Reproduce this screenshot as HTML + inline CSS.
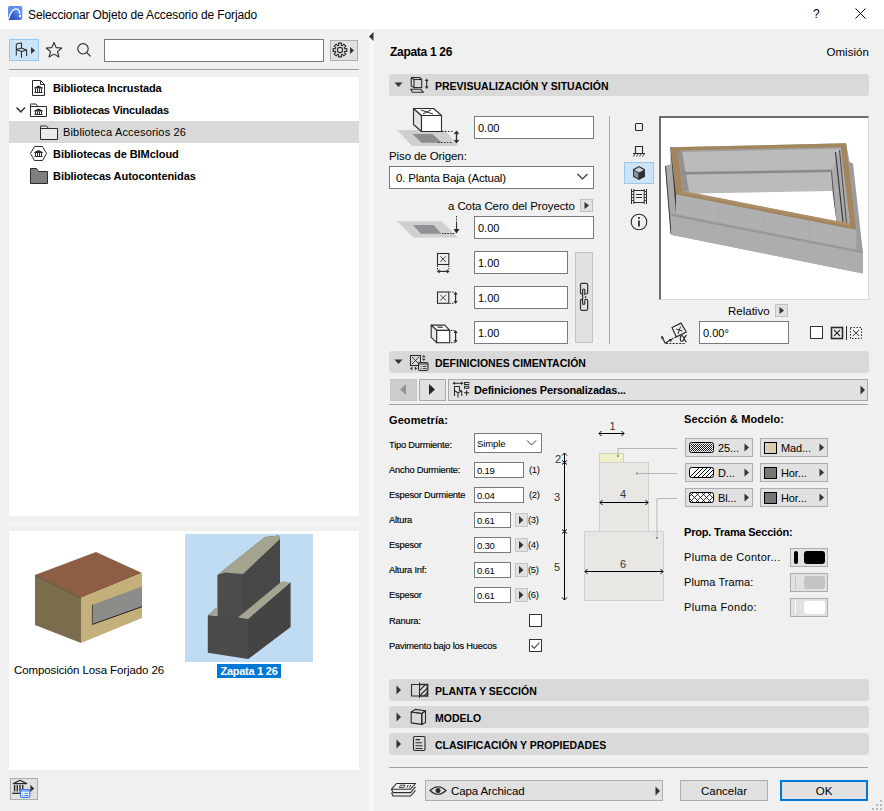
<!DOCTYPE html>
<html><head><meta charset="utf-8"><style>
html,body{margin:0;padding:0;width:884px;height:811px;overflow:hidden;background:#f0f0f0;font-family:"Liberation Sans", sans-serif;}
body{position:relative;}
</style></head><body>
<div style="position:absolute;left:0px;top:0px;width:884px;height:29px;background:#fff"></div>
<svg style="position:absolute;left:8px;top:6px;" width="15" height="15" viewBox="0 0 15 15"><defs><linearGradient id="lg1" x1="0" y1="1" x2="0.8" y2="0.2"><stop offset="0" stop-color="#1f3fa8"/><stop offset="0.6" stop-color="#3f6ad0"/><stop offset="1" stop-color="#5f8ff0"/></linearGradient></defs><rect x="0" y="0" width="14.3" height="14" rx="1.8" fill="#5e8ef0"/><path d="M0.3 14 Q3 3.4 8 3 Q11.6 2.9 12.3 8.5 V14 Z" fill="url(#lg1)"/><path d="M0.4 13.6 Q3 3.2 8 2.8 Q11.3 2.7 12 7.8" stroke="#fff" stroke-width="1.3" fill="none"/><rect x="11" y="8.9" width="2.1" height="2.1" fill="#fff"/></svg>
<div style="position:absolute;top:8.64px;font-size:12px;line-height:12px;font-weight:normal;color:#000;white-space:nowrap;letter-spacing:-0.12px;left:28px;">Seleccionar Objeto de Accesorio de Forjado</div>
<div style="position:absolute;top:7.84px;font-size:12px;line-height:12px;font-weight:normal;color:#000;white-space:nowrap;letter-spacing:0px;left:813px;">?</div>
<svg style="position:absolute;left:855px;top:8px;" width="12" height="11" viewBox="0 0 12 11"><path d="M0.5 0.5 L10.5 10.5 M10.5 0.5 L0.5 10.5" stroke="#000" stroke-width="1" fill="none"/></svg>
<div style="position:absolute;left:0px;top:29px;width:369px;height:782px;background:#f0f0f0"></div>
<div style="position:absolute;left:369px;top:29px;width:5px;height:782px;background:#f7f7f7"></div>
<div style="position:absolute;left:374px;top:29px;width:510px;height:782px;background:#f0f0f0"></div>
<svg style="position:absolute;left:369px;top:32px;" width="5" height="9" viewBox="0 0 5 9"><path d="M0 4.5 L4.5 0 L4.5 9 Z" fill="#333"/></svg>
<div style="position:absolute;left:9px;top:39px;width:30px;height:22px;background:#cce4f7;border:1px solid #99c9ef;box-sizing:border-box"></div>
<svg style="position:absolute;left:14px;top:42px;" width="24" height="17" viewBox="0 0 24 17"><path d="M2.3 13.6 V3 Q2.3 1.7 3.8 1.4 L7.5 1 V6 M2.3 7.4 L7.5 9.4 L12.6 8 L7.5 6 Z M7.5 9.4 V15.8 M12.6 8 V14" stroke="#2b2b2b" stroke-width="1.05" fill="none" stroke-linejoin="round"/><path d="M17 5 L21 8.5 L17 12 Z" fill="#333"/></svg>
<svg style="position:absolute;left:45px;top:41px;" width="18" height="18" viewBox="0 0 18 18"><path d="M9 1.5 L11.2 6.6 L16.7 7 L12.5 10.6 L13.9 16 L9 13.1 L4.1 16 L5.5 10.6 L1.3 7 L6.8 6.6 Z" stroke="#2b2b2b" stroke-width="1.1" fill="none" stroke-linejoin="round"/></svg>
<svg style="position:absolute;left:75px;top:41px;" width="18" height="18" viewBox="0 0 18 18"><circle cx="8" cy="7.8" r="5.2" stroke="#2b2b2b" stroke-width="1.1" fill="none"/><path d="M11.8 11.6 L15.6 15.4" stroke="#2b2b2b" stroke-width="1.2"/></svg>
<div style="position:absolute;left:104px;top:39px;width:220px;height:23px;background:#fff;border:1px solid #7a7a7a;box-sizing:border-box"></div>
<div style="position:absolute;left:330px;top:40px;width:28px;height:21px;background:#e1e1e1;border:1px solid #adadad;box-sizing:border-box"></div>
<svg style="position:absolute;left:330px;top:41px;" width="28" height="19" viewBox="0 0 28 19"><polygon points="8.69,4.28 8.54,2.15 11.46,2.15 11.31,4.28 12.42,4.74 13.81,3.13 15.87,5.19 14.26,6.58 14.72,7.69 16.85,7.54 16.85,10.46 14.72,10.31 14.26,11.42 15.87,12.81 13.81,14.87 12.42,13.26 11.31,13.72 11.46,15.85 8.54,15.85 8.69,13.72 7.58,13.26 6.19,14.87 4.13,12.81 5.74,11.42 5.28,10.31 3.15,10.46 3.15,7.54 5.28,7.69 5.74,6.58 4.13,5.19 6.19,3.13 7.58,4.74" stroke="#2b2b2b" stroke-width="1.1" fill="none" stroke-linejoin="round"/><circle cx="10" cy="9" r="2.6" stroke="#2b2b2b" stroke-width="1.1" fill="none"/><path d="M20 6 L24 9.5 L20 13 Z" fill="#333"/></svg>
<div style="position:absolute;left:9px;top:69px;width:350px;height:1px;background:#a0a0a0"></div>
<div style="position:absolute;left:9px;top:77px;width:350px;height:439px;background:#fff"></div>
<div style="position:absolute;left:9px;top:121px;width:350px;height:22px;background:#d9d9d9"></div>
<svg style="position:absolute;left:31px;top:79px;" width="16" height="18" viewBox="0 0 16 18"><path d="M1.5 1.5 H9.5 L13.5 5.5 V16.5 H1.5 Z M9.5 1.5 V5.5 H13.5" stroke="#2b2b2b" stroke-width="1" fill="#fff"/><path d="M3.5 9 L7.5 7 L11.5 9 Z M4.5 9.5 V13 M6.5 9.5 V13 M8.5 9.5 V13 M10.5 9.5 V13 M3.5 13.5 H11.5" stroke="#2b2b2b" stroke-width="1" fill="#2b2b2b"/></svg>
<svg style="position:absolute;left:15px;top:106px;" width="12" height="8" viewBox="0 0 12 8"><path d="M1.5 1.5 L5.8 5.8 L10 1.5" stroke="#3a3a3a" stroke-width="1.6" fill="none"/></svg>
<svg style="position:absolute;left:29px;top:101px;" width="20" height="17" viewBox="0 0 20 17"><path d="M1.5 3.5 V15.5 H17.5 V5.5 H9 L7 3 H1.5 Z M1.5 5.5 H9" stroke="#2b2b2b" stroke-width="1" fill="#fff"/><path d="M5.5 10 L9.5 8 L13.5 10 Z M6.5 10.5 V13 M8.5 10.5 V13 M10.5 10.5 V13 M12.5 10.5 V13 M5.5 13.5 H13.5" stroke="#2b2b2b" stroke-width="1" fill="#2b2b2b"/></svg>
<svg style="position:absolute;left:39px;top:123px;" width="20" height="18" viewBox="0 0 20 18"><path d="M1.5 3.5 V16.5 H18.5 V5.5 H9.5 L7.5 3 H1.5 Z M1.5 5.5 H9.5" stroke="#2b2b2b" stroke-width="1" fill="#ececec"/></svg>
<svg style="position:absolute;left:29px;top:145px;" width="20" height="18" viewBox="0 0 20 18"><path d="M5.5 1.5 H13.5 L17.5 8.5 L13.5 15.5 H5.5 L1.5 8.5 Z" stroke="#2b2b2b" stroke-width="1" fill="#fff"/><path d="M5.5 7.5 L9.5 5.5 L13.5 7.5 Z M6.5 8 V11 M8.5 8 V11 M10.5 8 V11 M12.5 8 V11 M5.5 11.5 H13.5" stroke="#2b2b2b" stroke-width="1" fill="#2b2b2b"/></svg>
<svg style="position:absolute;left:29px;top:167px;" width="20" height="18" viewBox="0 0 20 18"><path d="M1.5 1.5 V16.5 H18.5 V4.5 H9.5 L7.5 1.5 Z" stroke="#2b2b2b" stroke-width="1" fill="#808080"/></svg>
<div style="position:absolute;top:82.69px;font-size:11px;line-height:11px;font-weight:bold;color:#000;white-space:nowrap;letter-spacing:-0.13px;left:53px;">Biblioteca Incrustada</div>
<div style="position:absolute;top:104.69px;font-size:11px;line-height:11px;font-weight:bold;color:#000;white-space:nowrap;letter-spacing:-0.17px;left:53px;">Bibliotecas Vinculadas</div>
<div style="position:absolute;top:126.69px;font-size:11px;line-height:11px;font-weight:normal;color:#000;white-space:nowrap;letter-spacing:0.16px;left:63px;">Biblioteca Accesorios 26</div>
<div style="position:absolute;top:148.69px;font-size:11px;line-height:11px;font-weight:bold;color:#000;white-space:nowrap;letter-spacing:-0.06px;left:53px;">Bibliotecas de BIMcloud</div>
<div style="position:absolute;top:170.69px;font-size:11px;line-height:11px;font-weight:bold;color:#000;white-space:nowrap;letter-spacing:-0.06px;left:53px;">Bibliotecas Autocontenidas</div>
<div style="position:absolute;left:9px;top:521px;width:350px;height:5px;background:#f6f6f6"></div>
<div style="position:absolute;left:9px;top:531px;width:350px;height:239px;background:#fff"></div>
<svg style="position:absolute;left:20px;top:540px;" width="140" height="115" viewBox="0 0 140 115"><polygon points="15,35 76,12 122,33 61,58" fill="#8d5e44"/><polygon points="15,35 61,58 61,103 15,85" fill="#7a6d4e"/><polygon points="61,58 122,33 122,78 61,103" fill="#c4b07a"/><polygon points="72.4,64.7 122,46.4 122,66.7 72.4,84.4" fill="#8c8c89"/><polyline points="72.4,84.4 122,66.7" stroke="#222" stroke-width="1" fill="none"/><polyline points="72.4,84.4 72.4,64.7" stroke="#333" stroke-width="0.8" fill="none"/><polyline points="61,58 15,35" stroke="#4a3020" stroke-width="0.6" fill="none"/></svg>
<div style="position:absolute;top:665.27px;font-size:11.5px;line-height:11.5px;font-weight:normal;color:#000;white-space:nowrap;letter-spacing:-0.1px;left:14px;">Composición Losa Forjado 26</div>
<div style="position:absolute;left:185px;top:534px;width:128px;height:128px;background:#c0dcf3"></div>
<svg style="position:absolute;left:185px;top:534px;" width="128" height="128" viewBox="0 0 128 128"><polygon points="32.4,41 80,3 94,1.5 95,5 95,52 58,88 32.4,86" fill="#4c4c4c"/><polygon points="58,40 95,5 95,52 58,88" fill="#474747"/><polygon points="32.4,41 80,3 94,1.5 95,5 58,40 40,38.5" fill="#a4a490"/><polygon points="22.8,81 63,85 105.4,48.5 105.4,93 63,125 22.8,118.7" fill="#4a4a4a"/><polygon points="63,85 105.4,48.5 105.4,93 63,125" fill="#444"/><polygon points="22.8,81 31,73.5 32.4,73.5 32.4,81.5" fill="#a4a490"/><polygon points="53,83.5 97,47.3 105.4,48.5 63,85" fill="#a4a490"/></svg>
<div style="position:absolute;left:217px;top:664px;width:64px;height:14px;background:#0078d7"></div>
<div style="position:absolute;top:665.69px;font-size:11px;line-height:11px;font-weight:bold;color:#fff;white-space:nowrap;letter-spacing:-0.25px;left:249px;transform:translateX(-50%);">Zapata 1 26</div>
<div style="position:absolute;left:10px;top:778px;width:28px;height:22px;background:#e1e1e1;border:1px solid #adadad;box-sizing:border-box"></div>
<svg style="position:absolute;left:11px;top:779px;" width="26" height="20" viewBox="0 0 26 20"><polygon points="2.3,4.6 8.9,1.3 15.7,4.6" stroke="#2b2b2b" stroke-width="1.2" fill="none" stroke-linejoin="round"/><path d="M3.6 6 V12.6 M6.3 6 V12.6 M9 6 V12.6 M11.7 6 V10" stroke="#2b2b2b" stroke-width="1.4"/><path d="M1.2 14.3 H10" stroke="#2b2b2b" stroke-width="1.3"/><rect x="9.6" y="10.6" width="9.2" height="7.8" rx="1.5" fill="#fff" stroke="#2f7cf6" stroke-width="1.2"/><path d="M9.6 12 H18.8" stroke="#2f7cf6" stroke-width="1"/><path d="M11.3 14.3 H12.3 M13.4 14.3 H17.3 M11.3 16.5 H12.3 M13.4 16.5 H17.3" stroke="#2f7cf6" stroke-width="1"/><path d="M19.4 5.8 L23.3 9.4 L19.4 13 Z" fill="#333"/></svg>
<div style="position:absolute;top:46.34px;font-size:12px;line-height:12px;font-weight:bold;color:#000;white-space:nowrap;letter-spacing:-0.3px;left:390px;">Zapata 1 26</div>
<div style="position:absolute;top:47.27px;font-size:11.5px;line-height:11.5px;font-weight:normal;color:#000;white-space:nowrap;letter-spacing:0.05px;right:15px;">Omisión</div>
<div style="position:absolute;left:389px;top:74px;width:480px;height:22px;background:#d9d9d9;border-radius:3px"></div>
<svg style="position:absolute;left:394px;top:82px;" width="9" height="6" viewBox="0 0 9 6"><path d="M0.5 0.5 H8.5 L4.5 5 Z" fill="#333"/></svg>
<svg style="position:absolute;left:408px;top:75px;" width="24" height="20" viewBox="0 0 24 20"><path d="M3.2 2.5 H11.6 L13.7 4.5 M3.2 2.5 V11 L6 12.6 M3.2 2.5 L6 4.5" stroke="#2b2b2b" stroke-width="1.1" fill="none" stroke-linejoin="round"/><rect x="6" y="4.5" width="7.7" height="8.1" stroke="#2b2b2b" stroke-width="1.1" fill="none"/><polygon points="2.6,14.3 12.8,14.3 15.5,17.3 4.5,17.3" stroke="#2b2b2b" stroke-width="1.05" fill="none" stroke-linejoin="round"/><path d="M18.7 5 V12.5" stroke="#2b2b2b" stroke-width="1.1"/><path d="M16.8 6 L18.7 3.6 L20.6 6 Z M16.8 11.5 L18.7 13.9 L20.6 11.5 Z" fill="#2b2b2b"/></svg>
<div style="position:absolute;top:80.91px;font-size:10.5px;line-height:10.5px;font-weight:bold;color:#000;white-space:nowrap;letter-spacing:0px;left:435px;">PREVISUALIZACIÓN Y SITUACIÓN</div>
<svg style="position:absolute;left:396px;top:106px;" width="64" height="42" viewBox="0 0 64 42"><polygon points="1,24 49,24 62,40 16,40" fill="#cfcfcf"/><polygon points="16.5,28 36.5,28 46,36.7 25.5,36.7" fill="#8c8c8c"/><polygon points="17.5,2.5 25.5,9.5 25.5,25.5 17.5,18.5" fill="#e3e3e3" stroke="#2b2b2b" stroke-width="1.1" stroke-linejoin="round"/><polygon points="25.5,9.5 45.5,9.5 45.5,25.5 25.5,25.5" fill="#fff" stroke="#2b2b2b" stroke-width="1.1" stroke-linejoin="round"/><polygon points="17.5,2.5 37.5,2.5 45.5,9.5 25.5,9.5" fill="#fff" stroke="#2b2b2b" stroke-width="1.1" stroke-linejoin="round"/><path d="M25 4 L37 8 M35 3.8 L27 8" stroke="#2b2b2b" stroke-width="1"/><path d="M46 25.5 H57 M42 36.5 H57" stroke="#2b2b2b" stroke-width="1" stroke-dasharray="1.5,1.5"/><path d="M60.5 26 V36 M58.5 28 L60.5 25.5 L62.5 28 M58.5 34 L60.5 36.5 L62.5 34" stroke="#2b2b2b" stroke-width="1.3" fill="none"/></svg>
<div style="position:absolute;left:474px;top:116px;width:120px;height:23px;background:#fff;border:1px solid #7a7a7a;box-sizing:border-box"></div>
<div style="position:absolute;top:123.09px;font-size:11px;line-height:11px;font-weight:normal;color:#000;white-space:nowrap;letter-spacing:0px;left:478px;">0.00</div>
<div style="position:absolute;top:151.27px;font-size:11.5px;line-height:11.5px;font-weight:normal;color:#000;white-space:nowrap;letter-spacing:-0.1px;left:389px;">Piso de Origen:</div>
<div style="position:absolute;left:389px;top:166px;width:205px;height:23px;background:#fff;border:1px solid #7a7a7a;box-sizing:border-box"></div>
<div style="position:absolute;top:173.27px;font-size:11.5px;line-height:11.5px;font-weight:normal;color:#000;white-space:nowrap;letter-spacing:-0.2px;left:396px;">0. Planta Baja (Actual)</div>
<svg style="position:absolute;left:577px;top:173px;" width="12" height="8" viewBox="0 0 12 8"><path d="M0.5 1 L5.5 6 L10.5 1" stroke="#333" stroke-width="1.1" fill="none"/></svg>
<div style="position:absolute;top:200.77px;font-size:11.5px;line-height:11.5px;font-weight:normal;color:#000;white-space:nowrap;letter-spacing:-0.1px;left:448px;">a Cota Cero del Proyecto</div>
<div style="position:absolute;left:580px;top:199px;width:13px;height:13px;background:#e1e1e1;border:1px solid #c0c0c0;box-sizing:border-box"></div>
<svg style="position:absolute;left:583px;top:201px;" width="8" height="9" viewBox="0 0 8 9"><path d="M1.5 1 L6 4.5 L1.5 8 Z" fill="#333"/></svg>
<svg style="position:absolute;left:396px;top:196px;" width="64" height="44" viewBox="0 0 64 44"><polygon points="1,25.3 45.9,25.3 61.7,41.6 17.4,41.6" fill="#d0d0d0"/><polygon points="16.9,29 37.8,29 45.4,37.7 25,37.7" fill="#8e9294"/><path d="M46 37.5 H59" stroke="#2b2b2b" stroke-width="1" stroke-dasharray="1.5,1.2"/><path d="M60.5 20 V27" stroke="#2b2b2b" stroke-width="1" stroke-dasharray="1.5,1.2"/><path d="M60.5 27 V37" stroke="#2b2b2b" stroke-width="1.1"/><path d="M57.5 33 L60.5 37.5 L63.5 33 Z" fill="#2b2b2b"/></svg>
<div style="position:absolute;left:474px;top:216px;width:120px;height:23px;background:#fff;border:1px solid #7a7a7a;box-sizing:border-box"></div>
<div style="position:absolute;top:223.09px;font-size:11px;line-height:11px;font-weight:normal;color:#000;white-space:nowrap;letter-spacing:0px;left:478px;">0.00</div>
<svg style="position:absolute;left:435px;top:252px;" width="18" height="22" viewBox="0 0 18 22"><rect x="2.5" y="1.5" width="11.3" height="11" stroke="#2b2b2b" stroke-width="1.1" fill="none"/><path d="M5.3 4.3 L11 10 M11 4.3 L5.3 10" stroke="#2b2b2b" stroke-width="0.9"/><path d="M2.5 13.5 V17.5 M13.8 13.5 V17.5" stroke="#2b2b2b" stroke-width="1" stroke-dasharray="1.5,1"/><path d="M3.5 19.4 H13" stroke="#2b2b2b" stroke-width="1.2"/><path d="M1.8 19.4 L4.6 17.3 V21.5 Z M14.6 19.4 L11.8 17.3 V21.5 Z" fill="#2b2b2b"/></svg>
<div style="position:absolute;left:474px;top:251px;width:94px;height:23px;background:#fff;border:1px solid #7a7a7a;box-sizing:border-box"></div>
<div style="position:absolute;top:258.09px;font-size:11px;line-height:11px;font-weight:normal;color:#000;white-space:nowrap;letter-spacing:0px;left:478px;">1.00</div>
<svg style="position:absolute;left:435px;top:288px;" width="26" height="18" viewBox="0 0 26 18"><rect x="2.5" y="4" width="11.3" height="11.3" stroke="#2b2b2b" stroke-width="1.1" fill="none"/><path d="M5.3 6.8 L11 12.5 M11 6.8 L5.3 12.5" stroke="#2b2b2b" stroke-width="0.9"/><path d="M14.5 4 H18.5 M14.5 15.3 H18.5" stroke="#2b2b2b" stroke-width="1" stroke-dasharray="1.5,1"/><path d="M20.6 5.5 V14" stroke="#2b2b2b" stroke-width="1.2"/><path d="M20.6 3.6 L18.5 6.4 H22.7 Z M20.6 15.9 L18.5 13.1 H22.7 Z" fill="#2b2b2b"/></svg>
<div style="position:absolute;left:474px;top:286px;width:94px;height:23px;background:#fff;border:1px solid #7a7a7a;box-sizing:border-box"></div>
<div style="position:absolute;top:293.09px;font-size:11px;line-height:11px;font-weight:normal;color:#000;white-space:nowrap;letter-spacing:0px;left:478px;">1.00</div>
<svg style="position:absolute;left:430px;top:323px;" width="30" height="22" viewBox="0 0 30 22"><polygon points="1.2,2.1 14.7,2.1 19.7,7.4 6.7,7.4" stroke="#2b2b2b" stroke-width="1.1" fill="#fff" stroke-linejoin="round"/><polygon points="1.2,2.1 6.7,7.4 6.7,19.7 1.2,14.4" stroke="#2b2b2b" stroke-width="1.1" fill="#e8e8e8" stroke-linejoin="round"/><rect x="6.7" y="7.4" width="13" height="12.3" stroke="#2b2b2b" stroke-width="1.1" fill="#fff"/><polygon points="6.8,3.4 12,3.4 13.4,5 8.2,5" fill="#555"/><path d="M21 7.5 H24.5 M21 19.7 H24.5" stroke="#2b2b2b" stroke-width="1" stroke-dasharray="1.5,1"/><path d="M25.6 9 V18.2" stroke="#2b2b2b" stroke-width="1.2"/><path d="M25.6 7.1 L23.5 9.9 H27.7 Z M25.6 20.1 L23.5 17.3 H27.7 Z" fill="#2b2b2b"/></svg>
<div style="position:absolute;left:474px;top:321px;width:94px;height:23px;background:#fff;border:1px solid #7a7a7a;box-sizing:border-box"></div>
<div style="position:absolute;top:328.09px;font-size:11px;line-height:11px;font-weight:normal;color:#000;white-space:nowrap;letter-spacing:0px;left:478px;">1.00</div>
<div style="position:absolute;left:575px;top:252px;width:18px;height:91px;background:#e1e1e1;border:1px solid #c4c4c4;box-sizing:border-box"></div>
<svg style="position:absolute;left:578px;top:281px;" width="12" height="32" viewBox="0 0 12 32"><path d="M3.6 13 Q2.5 13 2.5 11.5 V3.8 Q2.5 2.3 4 2.3 H8.2 Q9.7 2.3 9.7 3.8 V11.5 Q9.7 13 8.2 13 H7 M3.6 18.3 Q2.5 18.3 2.5 19.8 V27.8 Q2.5 29.3 4 29.3 H8.2 Q9.7 29.3 9.7 27.8 V19.8 Q9.7 18.3 8.2 18.3 H7 M6.8 13.5 V9.3 Q6.8 8 5.7 8 Q4.6 8 4.6 9.3 V22 Q4.6 23.3 5.7 23.3 Q6.8 23.3 6.8 22 V19.5" stroke="#2b3035" stroke-width="1.2" fill="none" stroke-linecap="round"/><rect x="6.9" y="15.2" width="1.3" height="1.6" fill="#2b3035"/></svg>
<div style="position:absolute;left:609px;top:116px;width:1px;height:228px;background:#a9a9a9"></div>
<svg style="position:absolute;left:634px;top:122px;" width="12" height="12" viewBox="0 0 12 12"><rect x="1.5" y="1.5" width="7" height="7" rx="1" stroke="#2b2b2b" stroke-width="1.1" fill="none"/></svg>
<svg style="position:absolute;left:632px;top:143px;" width="14" height="14" viewBox="0 0 14 14"><path d="M3.5 10.5 V3.5 H10.5 V10.5 M1 10.5 H13" stroke="#2b2b2b" stroke-width="1.1" fill="none"/><path d="M1.5 13.5 L3 11 M4.5 13.5 L6 11 M7.5 13.5 L9 11 M10.5 13.5 L12 11" stroke="#2b2b2b" stroke-width="0.9"/></svg>
<div style="position:absolute;left:624px;top:162px;width:30px;height:22px;background:#cce4f7;border:1px solid #99c9ef;box-sizing:border-box"></div>
<svg style="position:absolute;left:631px;top:165px;" width="16" height="16" viewBox="0 0 16 16"><polygon points="8,1 14,4.3 14,11.7 8,15 2,11.7 2,4.3" fill="#2c3236"/><polygon points="8,2.3 12.8,4.9 8,7.5 3.2,4.9" fill="#c9d1d6"/><polygon points="2.9,5.8 7.3,8.3 7.3,13.6 2.9,11.1" fill="#8e979c"/></svg>
<svg style="position:absolute;left:630px;top:187px;" width="18" height="18" viewBox="0 0 18 18"><path d="M1.5 2 V17 M3.8 2 V17 M14.2 2 V17 M16.5 2 V17" stroke="#2b2b2b" stroke-width="1"/><path d="M1.5 4.5 H3.8 M1.5 7.5 H3.8 M1.5 10.5 H3.8 M1.5 13.5 H3.8 M14.2 4.5 H16.5 M14.2 7.5 H16.5 M14.2 10.5 H16.5 M14.2 13.5 H16.5" stroke="#2b2b2b" stroke-width="0.9"/><path d="M3.8 3.5 H14.2 M3.8 15.5 H14.2 M6 7.5 H12 M6 10.5 H12" stroke="#2b2b2b" stroke-width="1.1"/></svg>
<svg style="position:absolute;left:629px;top:212px;" width="20" height="20" viewBox="0 0 20 20"><circle cx="10" cy="10" r="7.8" stroke="#2b2b2b" stroke-width="1.1" fill="none"/><circle cx="10" cy="6" r="1.1" fill="#2b2b2b"/><path d="M10 8.5 V14.5" stroke="#2b2b2b" stroke-width="1.8"/></svg>
<div style="position:absolute;left:659px;top:116px;width:210px;height:184px;background:#fff;border-left:2px solid #6d6d6d;border-top:2px solid #6d6d6d;border-right:1px solid #dadada;border-bottom:1px solid #dadada;box-sizing:border-box"></div>
<svg style="position:absolute;left:659px;top:116px;" width="210" height="184" viewBox="0 0 210 184"><polygon points="6.2,50 11.4,48.5 11.4,31.3 187.1,27.3 190.8,46.4 203.8,136 203.8,157.5 12,118.7" fill="#acacac"/><polygon points="6.2,50 11,49 17,97 12,118.7" fill="#a9a9a9"/><polyline points="6.5,50 12,118" stroke="#3c3c3c" stroke-width="1" fill="none"/><polygon points="11.4,31.3 13.2,31.3 18.8,97 17,97" fill="#3a3a3a"/><polygon points="189,45.5 194,47.5 203.8,136 203.8,157.5 197.3,135 197.3,114" fill="#9c9c9c"/><polygon points="11.4,31.3 187.1,27.3 197.3,114 17,78.5" fill="#a3865e"/><polygon points="19,35 181.6,31.6 190.8,107.5 24,75.3" fill="#bbbbbb"/><polyline points="21,35.3 181,32" stroke="#a0a0a0" stroke-width="1.5" fill="none"/><polygon points="19,35 23,35 30,75.5 24,75.3" fill="#929292"/><polygon points="24,56 176,53.5 176,56 25,58.5" fill="#8a8a8a"/><polygon points="173,54 181.6,31.6 190.8,107.5 177.5,105.3 173.5,75" fill="#ababab"/><polyline points="176.5,36 184,106" stroke="#3a3a3a" stroke-width="1.2" fill="none"/><polyline points="180.5,34 187.5,107" stroke="#4a4a4a" stroke-width="1" fill="none"/><polyline points="172.5,56 177,105" stroke="#555" stroke-width="1" fill="none"/><polygon points="39,77.5 173.2,75 177.5,105.5" fill="#fff"/><polygon points="24,75.3 190.8,107.5 191,110 22,77" fill="#ad9068"/><polygon points="17,78.5 197.3,114 197.3,135.5 17,97.5" fill="#b0b0b0"/><polygon points="12,97.5 203.8,135 203.8,137.5 12,100" fill="#979797"/><polygon points="12,100 203.8,137.5 203.8,157.5 12,118.7" fill="#adadad"/><path d="M60 88 V107 M105 97 V116 M150 106 V125 M55 104 V124 M100 113 V132 M145 122 V141 M190 130 V150" stroke="#a6a6a6" stroke-width="0.5"/></svg>
<div style="position:absolute;left:389px;top:351px;width:480px;height:22px;background:#d9d9d9;border-radius:3px"></div>
<svg style="position:absolute;left:394px;top:359px;" width="9" height="6" viewBox="0 0 9 6"><path d="M0.5 0.5 H8.5 L4.5 5 Z" fill="#333"/></svg>
<svg style="position:absolute;left:408px;top:352px;" width="24" height="20" viewBox="0 0 24 20"><rect x="2.5" y="3.5" width="10" height="10" stroke="#2b2b2b" stroke-width="1.1" fill="none"/><path d="M4 5 L11 12 M11 5 L4 12" stroke="#2b2b2b" stroke-width="0.9"/><path d="M14 5.3 L15.8 3 L17.6 5.3 Z M14 6.8 L15.8 9 L17.6 6.8 Z" fill="#2b2b2b"/><rect x="10.5" y="10.5" width="9.5" height="8" rx="1.5" stroke="#2b2b2b" stroke-width="1.1" fill="#d9d9d9"/><path d="M10.5 12 H20" stroke="#2b2b2b" stroke-width="1"/><path d="M12.5 14.5 H13.5 M14.8 14.5 H18.5 M12.5 16.6 H13.5 M14.8 16.6 H18.5" stroke="#2b2b2b" stroke-width="0.9"/><path d="M2 16.4 L4.3 14.6 V18.2 Z M9.2 16.4 L6.9 14.6 V18.2 Z" fill="#2b2b2b"/></svg>
<div style="position:absolute;top:357.91px;font-size:10.5px;line-height:10.5px;font-weight:bold;color:#000;white-space:nowrap;letter-spacing:0px;left:435px;">DEFINICIONES CIMENTACIÓN</div>
<div style="position:absolute;left:390px;top:379px;width:27px;height:22px;background:#cdcdcd;border:1px solid #c6c6c6;box-sizing:border-box"></div>
<svg style="position:absolute;left:399px;top:383px;" width="8" height="13" viewBox="0 0 8 13"><path d="M7 1 L1 6.5 L7 12 Z" fill="#8f9598"/></svg>
<div style="position:absolute;left:419px;top:379px;width:27px;height:22px;background:#e1e1e1;border:1px solid #a9a9a9;box-sizing:border-box"></div>
<svg style="position:absolute;left:428px;top:383px;" width="8" height="13" viewBox="0 0 8 13"><path d="M1 1 L7 6.5 L1 12 Z" fill="#1f2a30"/></svg>
<div style="position:absolute;left:448px;top:379px;width:420px;height:22px;background:#e1e1e1;border:1px solid #a9a9a9;box-sizing:border-box"></div>
<svg style="position:absolute;left:451px;top:380px;" width="20" height="20" viewBox="0 0 20 20"><path d="M2.5 3.3 H11.5" stroke="#2b2b2b" stroke-width="1"/><path d="M1.5 3.3 L4 1.5 V5.1 Z M12.5 3.3 L10 1.5 V5.1 Z" fill="#2b2b2b"/><path d="M3.5 16 V6.5 H8.5 V10.5 M3.5 10.8 L7 12.8 L10.8 11 L8.5 10.2 M7 12.8 V17.5 M10.8 11 V16" stroke="#2b2b2b" stroke-width="1.05" fill="none" stroke-linejoin="round"/><rect x="13.5" y="2.5" width="4.3" height="2" stroke="#2b2b2b" stroke-width="1" fill="none"/><rect x="13.5" y="6.3" width="4.3" height="2" stroke="#2b2b2b" stroke-width="1" fill="none"/><path d="M13 12.8 H18.2 M15.6 10.2 V15.4" stroke="#2b2b2b" stroke-width="1.1"/></svg>
<div style="position:absolute;top:384.69px;font-size:11px;line-height:11px;font-weight:bold;color:#000;white-space:nowrap;letter-spacing:-0.2px;left:474px;">Definiciones Personalizadas...</div>
<svg style="position:absolute;left:859.5px;top:385px;" width="6" height="10" viewBox="0 0 6 10"><path d="M0.5 0.5 V9.5 L5 5 Z" fill="#333"/></svg>
<div style="position:absolute;left:389px;top:404px;width:479px;height:1px;background:#a0a0a0"></div>
<div style="position:absolute;top:414.69px;font-size:11px;line-height:11px;font-weight:bold;color:#000;white-space:nowrap;letter-spacing:0.1px;left:389px;">Geometría:</div>
<div style="position:absolute;top:440.73px;font-size:9.3px;line-height:9.3px;font-weight:normal;color:#000;white-space:nowrap;letter-spacing:-0.2px;-webkit-text-stroke:0.15px #000;left:389px;">Tipo Durmiente:</div>
<div style="position:absolute;left:474px;top:433px;width:68px;height:20px;background:#fff;border:1px solid #7a7a7a;box-sizing:border-box"></div>
<div style="position:absolute;top:438.96px;font-size:9.5px;line-height:9.5px;font-weight:normal;color:#000;white-space:nowrap;letter-spacing:-0.1px;left:477px;">Simple</div>
<svg style="position:absolute;left:526px;top:439px;" width="12" height="8" viewBox="0 0 12 8"><path d="M1 1.5 L5.5 6 L10 1.5" stroke="#333" stroke-width="1" fill="none"/></svg>
<div style="position:absolute;top:465.73px;font-size:9.3px;line-height:9.3px;font-weight:normal;color:#000;white-space:nowrap;letter-spacing:-0.2px;-webkit-text-stroke:0.15px #000;left:389px;">Ancho Durmiente:</div>
<div style="position:absolute;left:474px;top:462px;width:50px;height:16px;background:#fff;border:1px solid #7a7a7a;box-sizing:border-box"></div>
<div style="position:absolute;top:465.96px;font-size:9.5px;line-height:9.5px;font-weight:normal;color:#000;white-space:nowrap;letter-spacing:-0.2px;left:477px;">0.19</div>
<div style="position:absolute;top:465.46px;font-size:9.5px;line-height:9.5px;font-weight:normal;color:#000;white-space:nowrap;letter-spacing:-0.3px;left:529px;">(1)</div>
<div style="position:absolute;top:490.73px;font-size:9.3px;line-height:9.3px;font-weight:normal;color:#000;white-space:nowrap;letter-spacing:-0.2px;-webkit-text-stroke:0.15px #000;left:389px;">Espesor Durmiente</div>
<div style="position:absolute;left:474px;top:487px;width:50px;height:16px;background:#fff;border:1px solid #7a7a7a;box-sizing:border-box"></div>
<div style="position:absolute;top:490.96px;font-size:9.5px;line-height:9.5px;font-weight:normal;color:#000;white-space:nowrap;letter-spacing:-0.2px;left:477px;">0.04</div>
<div style="position:absolute;top:490.46px;font-size:9.5px;line-height:9.5px;font-weight:normal;color:#000;white-space:nowrap;letter-spacing:-0.3px;left:529px;">(2)</div>
<div style="position:absolute;top:515.73px;font-size:9.3px;line-height:9.3px;font-weight:normal;color:#000;white-space:nowrap;letter-spacing:-0.2px;-webkit-text-stroke:0.15px #000;left:389px;">Altura</div>
<div style="position:absolute;left:474px;top:512px;width:37px;height:16px;background:#fff;border:1px solid #7a7a7a;box-sizing:border-box"></div>
<div style="position:absolute;top:515.96px;font-size:9.5px;line-height:9.5px;font-weight:normal;color:#000;white-space:nowrap;letter-spacing:-0.2px;left:477px;">0.61</div>
<div style="position:absolute;left:515px;top:513px;width:13px;height:14px;background:#e1e1e1;border:1px solid #c4c4c4;box-sizing:border-box"></div>
<svg style="position:absolute;left:518px;top:515px;" width="7" height="10" viewBox="0 0 7 10"><path d="M1 1 L5.5 5 L1 9 Z" fill="#333"/></svg>
<div style="position:absolute;top:515.46px;font-size:9.5px;line-height:9.5px;font-weight:normal;color:#000;white-space:nowrap;letter-spacing:-0.3px;left:528px;">(3)</div>
<div style="position:absolute;top:540.73px;font-size:9.3px;line-height:9.3px;font-weight:normal;color:#000;white-space:nowrap;letter-spacing:-0.2px;-webkit-text-stroke:0.15px #000;left:389px;">Espesor</div>
<div style="position:absolute;left:474px;top:537px;width:37px;height:16px;background:#fff;border:1px solid #7a7a7a;box-sizing:border-box"></div>
<div style="position:absolute;top:540.96px;font-size:9.5px;line-height:9.5px;font-weight:normal;color:#000;white-space:nowrap;letter-spacing:-0.2px;left:477px;">0.30</div>
<div style="position:absolute;left:515px;top:538px;width:13px;height:14px;background:#e1e1e1;border:1px solid #c4c4c4;box-sizing:border-box"></div>
<svg style="position:absolute;left:518px;top:540px;" width="7" height="10" viewBox="0 0 7 10"><path d="M1 1 L5.5 5 L1 9 Z" fill="#333"/></svg>
<div style="position:absolute;top:540.46px;font-size:9.5px;line-height:9.5px;font-weight:normal;color:#000;white-space:nowrap;letter-spacing:-0.3px;left:528px;">(4)</div>
<div style="position:absolute;top:565.73px;font-size:9.3px;line-height:9.3px;font-weight:normal;color:#000;white-space:nowrap;letter-spacing:-0.2px;-webkit-text-stroke:0.15px #000;left:389px;">Altura Inf:</div>
<div style="position:absolute;left:474px;top:562px;width:37px;height:16px;background:#fff;border:1px solid #7a7a7a;box-sizing:border-box"></div>
<div style="position:absolute;top:565.96px;font-size:9.5px;line-height:9.5px;font-weight:normal;color:#000;white-space:nowrap;letter-spacing:-0.2px;left:477px;">0.61</div>
<div style="position:absolute;left:515px;top:563px;width:13px;height:14px;background:#e1e1e1;border:1px solid #c4c4c4;box-sizing:border-box"></div>
<svg style="position:absolute;left:518px;top:565px;" width="7" height="10" viewBox="0 0 7 10"><path d="M1 1 L5.5 5 L1 9 Z" fill="#333"/></svg>
<div style="position:absolute;top:565.46px;font-size:9.5px;line-height:9.5px;font-weight:normal;color:#000;white-space:nowrap;letter-spacing:-0.3px;left:528px;">(5)</div>
<div style="position:absolute;top:590.73px;font-size:9.3px;line-height:9.3px;font-weight:normal;color:#000;white-space:nowrap;letter-spacing:-0.2px;-webkit-text-stroke:0.15px #000;left:389px;">Espesor</div>
<div style="position:absolute;left:474px;top:587px;width:37px;height:16px;background:#fff;border:1px solid #7a7a7a;box-sizing:border-box"></div>
<div style="position:absolute;top:590.96px;font-size:9.5px;line-height:9.5px;font-weight:normal;color:#000;white-space:nowrap;letter-spacing:-0.2px;left:477px;">0.61</div>
<div style="position:absolute;left:515px;top:588px;width:13px;height:14px;background:#e1e1e1;border:1px solid #c4c4c4;box-sizing:border-box"></div>
<svg style="position:absolute;left:518px;top:590px;" width="7" height="10" viewBox="0 0 7 10"><path d="M1 1 L5.5 5 L1 9 Z" fill="#333"/></svg>
<div style="position:absolute;top:590.46px;font-size:9.5px;line-height:9.5px;font-weight:normal;color:#000;white-space:nowrap;letter-spacing:-0.3px;left:528px;">(6)</div>
<div style="position:absolute;top:616.73px;font-size:9.3px;line-height:9.3px;font-weight:normal;color:#000;white-space:nowrap;letter-spacing:-0.2px;-webkit-text-stroke:0.15px #000;left:389px;">Ranura:</div>
<div style="position:absolute;left:529px;top:614px;width:13px;height:13px;background:#fff;border:1px solid #333;box-sizing:border-box"></div>
<div style="position:absolute;top:641.73px;font-size:9.3px;line-height:9.3px;font-weight:normal;color:#000;white-space:nowrap;letter-spacing:-0.2px;-webkit-text-stroke:0.15px #000;left:389px;">Pavimento bajo los Huecos</div>
<div style="position:absolute;left:529px;top:639px;width:13px;height:13px;background:#fff;border:1px solid #333;box-sizing:border-box"></div>
<svg style="position:absolute;left:529px;top:639px;" width="13" height="13" viewBox="0 0 13 13"><path d="M2.5 6.5 L5.2 9.3 L10.5 3.5" stroke="#333" stroke-width="1.1" fill="none"/></svg>
<svg style="position:absolute;left:548px;top:410px;" width="135" height="200" viewBox="0 0 135 200"><rect x="51.5" y="43.5" width="24" height="9" fill="#efefc8" stroke="#d4d4b0" stroke-width="1"/><rect x="51.5" y="52.5" width="49" height="69" fill="#e8e7e4" stroke="#d0d0cc" stroke-width="1"/><rect x="36.5" y="121.5" width="79" height="69" fill="#e8e7e4" stroke="#d0d0cc" stroke-width="1"/><path d="M70 46 V38.5 H129 M89 63.5 H129 M109 128 V88.5 H129" stroke="#b5b5b5" stroke-width="1" fill="none"/><rect x="69" y="45" width="2" height="2" fill="#999"/><rect x="88" y="62.5" width="2" height="2" fill="#999"/><rect x="108" y="127" width="2" height="2" fill="#999"/><path d="M51 23.5 H76 M53.5 21 L51 23.5 L53.5 26 M73.5 21 L76 23.5 L73.5 26" stroke="#000" stroke-width="1" fill="none"/><path d="M16.5 43 V190 M14 45.5 L16.5 43 L19 45.5 M14 187.5 L16.5 190 L19 187.5 M14 50.5 L19 54.5 M19 50.5 L14 54.5 M14 119.5 L19 123.5 M19 119.5 L14 123.5" stroke="#000" stroke-width="1" fill="none"/><path d="M52 92.5 H100 M54.5 90 L52 92.5 L54.5 95 M97.5 90 L100 92.5 L97.5 95" stroke="#000" stroke-width="1" fill="none"/><path d="M37 161.5 H115 M39.5 159 L37 161.5 L39.5 164 M112.5 159 L115 161.5 L112.5 164" stroke="#000" stroke-width="1" fill="none"/></svg>
<div style="position:absolute;top:421.19px;font-size:11px;line-height:11px;font-weight:normal;color:#333;white-space:nowrap;letter-spacing:0px;left:612.5px;transform:translateX(-50%);">1</div>
<div style="position:absolute;top:453.69px;font-size:11px;line-height:11px;font-weight:normal;color:#333;white-space:nowrap;letter-spacing:0px;left:558px;transform:translateX(-50%);">2</div>
<div style="position:absolute;top:491.69px;font-size:11px;line-height:11px;font-weight:normal;color:#333;white-space:nowrap;letter-spacing:0px;left:557px;transform:translateX(-50%);">3</div>
<div style="position:absolute;top:488.69px;font-size:11px;line-height:11px;font-weight:normal;color:#333;white-space:nowrap;letter-spacing:0px;left:623px;transform:translateX(-50%);">4</div>
<div style="position:absolute;top:561.69px;font-size:11px;line-height:11px;font-weight:normal;color:#333;white-space:nowrap;letter-spacing:0px;left:557px;transform:translateX(-50%);">5</div>
<div style="position:absolute;top:558.69px;font-size:11px;line-height:11px;font-weight:normal;color:#333;white-space:nowrap;letter-spacing:0px;left:623px;transform:translateX(-50%);">6</div>
<div style="position:absolute;top:413.69px;font-size:11px;line-height:11px;font-weight:bold;color:#000;white-space:nowrap;letter-spacing:0.1px;left:684px;">Sección &amp; Modelo:</div>
<div style="position:absolute;left:685px;top:438px;width:68px;height:19px;background:#e1e1e1;border:1px solid #adadad;box-sizing:border-box"></div>
<svg style="position:absolute;left:689px;top:442px;" width="26" height="12" viewBox="0 0 26 12"><defs><pattern id="pd" width="2" height="2" patternUnits="userSpaceOnUse"><rect width="1" height="1" fill="#111"/><rect x="1" y="1" width="1" height="1" fill="#111"/></pattern></defs><rect x="0.5" y="0.5" width="24" height="10" rx="2" fill="#fff" stroke="#000"/><rect x="1.5" y="1.5" width="22" height="8" fill="url(#pd)"/></svg>
<div style="position:absolute;top:442.69px;font-size:11px;line-height:11px;font-weight:normal;color:#000;white-space:nowrap;letter-spacing:-0.1px;left:718px;">25...</div>
<svg style="position:absolute;left:744px;top:443px;" width="6" height="9" viewBox="0 0 6 9"><path d="M0.5 0.5 V8.5 L5 4.5 Z" fill="#333"/></svg>
<div style="position:absolute;left:760px;top:438px;width:68px;height:19px;background:#e1e1e1;border:1px solid #adadad;box-sizing:border-box"></div>
<div style="position:absolute;left:764px;top:442px;width:13px;height:12px;background:#dccdb0;border:1px solid #000;box-sizing:border-box"></div>
<div style="position:absolute;top:442.69px;font-size:11px;line-height:11px;font-weight:normal;color:#000;white-space:nowrap;letter-spacing:-0.1px;left:781px;">Mad...</div>
<svg style="position:absolute;left:819px;top:443px;" width="6" height="9" viewBox="0 0 6 9"><path d="M0.5 0.5 V8.5 L5 4.5 Z" fill="#333"/></svg>
<div style="position:absolute;left:685px;top:463px;width:68px;height:19px;background:#e1e1e1;border:1px solid #adadad;box-sizing:border-box"></div>
<svg style="position:absolute;left:689px;top:467px;" width="26" height="12" viewBox="0 0 26 12"><rect x="0.5" y="0.5" width="24" height="10" rx="2" fill="#fff" stroke="#000"/><path d="M1 10 L10 1 M5 10 L14 1 M9 10 L18 1 M13 10 L22 1 M17 10 L24 3 M21 10 L24 7" stroke="#000" stroke-width="1"/></svg>
<div style="position:absolute;top:467.69px;font-size:11px;line-height:11px;font-weight:normal;color:#000;white-space:nowrap;letter-spacing:-0.1px;left:718px;">D...</div>
<svg style="position:absolute;left:744px;top:468px;" width="6" height="9" viewBox="0 0 6 9"><path d="M0.5 0.5 V8.5 L5 4.5 Z" fill="#333"/></svg>
<div style="position:absolute;left:760px;top:463px;width:68px;height:19px;background:#e1e1e1;border:1px solid #adadad;box-sizing:border-box"></div>
<div style="position:absolute;left:764px;top:467px;width:13px;height:12px;background:#767676;border:1px solid #000;box-sizing:border-box"></div>
<div style="position:absolute;top:467.69px;font-size:11px;line-height:11px;font-weight:normal;color:#000;white-space:nowrap;letter-spacing:-0.1px;left:781px;">Hor...</div>
<svg style="position:absolute;left:819px;top:468px;" width="6" height="9" viewBox="0 0 6 9"><path d="M0.5 0.5 V8.5 L5 4.5 Z" fill="#333"/></svg>
<div style="position:absolute;left:685px;top:488px;width:68px;height:19px;background:#e1e1e1;border:1px solid #adadad;box-sizing:border-box"></div>
<svg style="position:absolute;left:689px;top:492px;" width="26" height="12" viewBox="0 0 26 12"><rect x="0.5" y="0.5" width="24" height="10" rx="2" fill="#fff" stroke="#000"/><path d="M1 1 L10 10 M7 1 L16 10 M13 1 L22 10 M19 1 L24 6 M1 7 L4 10 M1 10 L10 1 M7 10 L16 1 M13 10 L22 1 M19 10 L24 5 M1 4 L4 1" stroke="#000" stroke-width="0.8"/></svg>
<div style="position:absolute;top:492.69px;font-size:11px;line-height:11px;font-weight:normal;color:#000;white-space:nowrap;letter-spacing:-0.1px;left:718px;">Bl...</div>
<svg style="position:absolute;left:744px;top:493px;" width="6" height="9" viewBox="0 0 6 9"><path d="M0.5 0.5 V8.5 L5 4.5 Z" fill="#333"/></svg>
<div style="position:absolute;left:760px;top:488px;width:68px;height:19px;background:#e1e1e1;border:1px solid #adadad;box-sizing:border-box"></div>
<div style="position:absolute;left:764px;top:492px;width:13px;height:12px;background:#767676;border:1px solid #000;box-sizing:border-box"></div>
<div style="position:absolute;top:492.69px;font-size:11px;line-height:11px;font-weight:normal;color:#000;white-space:nowrap;letter-spacing:-0.1px;left:781px;">Hor...</div>
<svg style="position:absolute;left:819px;top:493px;" width="6" height="9" viewBox="0 0 6 9"><path d="M0.5 0.5 V8.5 L5 4.5 Z" fill="#333"/></svg>
<div style="position:absolute;top:526.69px;font-size:11px;line-height:11px;font-weight:bold;color:#000;white-space:nowrap;letter-spacing:-0.2px;left:684px;">Prop. Trama Sección:</div>
<div style="position:absolute;top:551.69px;font-size:11px;line-height:11px;font-weight:normal;color:#000;white-space:nowrap;letter-spacing:0.3px;left:684px;">Pluma de Contor...</div>
<div style="position:absolute;left:790px;top:548px;width:38px;height:19px;background:#e1e1e1;border:1px solid #adadad;box-sizing:border-box"></div>
<div style="position:absolute;left:794px;top:551px;width:4px;height:13px;background:#000;border-radius:2px"></div>
<div style="position:absolute;left:804px;top:551px;width:21px;height:13px;background:#000;border-radius:3px"></div>
<div style="position:absolute;top:576.69px;font-size:11px;line-height:11px;font-weight:normal;color:#000;white-space:nowrap;letter-spacing:0.07px;left:684px;">Pluma Trama:</div>
<div style="position:absolute;left:790px;top:573px;width:38px;height:19px;background:#e1e1e1;border:1px solid #adadad;box-sizing:border-box"></div>
<div style="position:absolute;left:795px;top:576px;width:1px;height:13px;background:#c4c4c4"></div>
<div style="position:absolute;left:804px;top:576px;width:21px;height:13px;background:#c4c4c4;border-radius:3px"></div>
<div style="position:absolute;top:601.69px;font-size:11px;line-height:11px;font-weight:normal;color:#000;white-space:nowrap;letter-spacing:0.37px;left:684px;">Pluma Fondo:</div>
<div style="position:absolute;left:790px;top:598px;width:38px;height:19px;background:#e1e1e1;border:1px solid #adadad;box-sizing:border-box"></div>
<div style="position:absolute;left:795px;top:601px;width:1px;height:13px;background:#fff"></div>
<div style="position:absolute;left:804px;top:601px;width:21px;height:13px;background:#fff;border-radius:3px"></div>
<div style="position:absolute;left:389px;top:679px;width:480px;height:22px;background:#d9d9d9;border-radius:3px"></div>
<svg style="position:absolute;left:396px;top:685px;" width="6" height="10" viewBox="0 0 6 10"><path d="M0.5 0.5 V9.5 L5 5 Z" fill="#333"/></svg>
<svg style="position:absolute;left:408px;top:680px;" width="24" height="20" viewBox="0 0 24 20"><defs><clipPath id="cph"><rect x="11.5" y="4.2" width="8.5" height="12"/></clipPath></defs><path d="M11.5 4.5 H3.5 V16 H11.5" stroke="#2b2b2b" stroke-width="1.1" fill="none"/><path d="M11.5 4.5 H19.5 V16 H11.5" stroke="#2b2b2b" stroke-width="1.7" fill="none"/><g clip-path="url(#cph)"><path d="M11 11 L18 4 M12 15.5 L20 7.5 M16 16 L21 11" stroke="#2b2b2b" stroke-width="1.1"/></g><path d="M11.5 2.5 V18" stroke="#2b2b2b" stroke-width="1.1"/></svg>
<div style="position:absolute;top:685.91px;font-size:10.5px;line-height:10.5px;font-weight:bold;color:#000;white-space:nowrap;letter-spacing:0px;left:435px;">PLANTA Y SECCIÓN</div>
<div style="position:absolute;left:389px;top:706px;width:480px;height:22px;background:#d9d9d9;border-radius:3px"></div>
<svg style="position:absolute;left:396px;top:712px;" width="6" height="10" viewBox="0 0 6 10"><path d="M0.5 0.5 V9.5 L5 5 Z" fill="#333"/></svg>
<svg style="position:absolute;left:408px;top:707px;" width="24" height="20" viewBox="0 0 24 20"><polygon points="3.2,5 7.1,2.4 17.5,3.7 13.8,6.5" stroke="#2b2b2b" stroke-width="1.1" fill="none" stroke-linejoin="round"/><polygon points="3.2,5 13.8,6.5 13.8,17.4 3.2,15.9" stroke="#2b2b2b" stroke-width="1.1" fill="none" stroke-linejoin="round"/><polygon points="13.8,6.5 17.5,3.7 17.5,15.4 13.8,17.4" stroke="#2b2b2b" stroke-width="1.1" fill="none" stroke-linejoin="round"/></svg>
<div style="position:absolute;top:712.91px;font-size:10.5px;line-height:10.5px;font-weight:bold;color:#000;white-space:nowrap;letter-spacing:0px;left:435px;">MODELO</div>
<div style="position:absolute;left:389px;top:733px;width:480px;height:22px;background:#d9d9d9;border-radius:3px"></div>
<svg style="position:absolute;left:396px;top:739px;" width="6" height="10" viewBox="0 0 6 10"><path d="M0.5 0.5 V9.5 L5 5 Z" fill="#333"/></svg>
<svg style="position:absolute;left:408px;top:734px;" width="24" height="20" viewBox="0 0 24 20"><rect x="5.5" y="2.5" width="11.5" height="14" rx="1.2" stroke="#2b2b2b" stroke-width="1.1" fill="none"/><path d="M7.5 5.6 H12 M7.5 8.7 H14 M7.5 11.8 H14.5 M7.5 14.5 H14.5" stroke="#2b2b2b" stroke-width="1.05"/></svg>
<div style="position:absolute;top:739.91px;font-size:10.5px;line-height:10.5px;font-weight:bold;color:#000;white-space:nowrap;letter-spacing:0px;left:435px;">CLASIFICACIÓN Y PROPIEDADES</div>
<div style="position:absolute;left:389px;top:767px;width:479px;height:1px;background:#a0a0a0"></div>
<svg style="position:absolute;left:390px;top:781px;" width="28" height="18" viewBox="0 0 28 18"><polygon points="6.5,2.5 25.5,2.5 20.5,8.2 1.5,8.2" stroke="#2b2b2b" stroke-width="1.1" fill="none" stroke-linejoin="round"/><path d="M1.5 8.2 L3 11.6 H20.5 L25.5 5.8 M1.5 11.6 L3 15 H20.5 L25.5 9.3" stroke="#2b2b2b" stroke-width="1.1" fill="none" stroke-linejoin="round"/><polygon points="10.5,4.2 15,4.2 13.8,6.5 9.3,6.5" stroke="#2b2b2b" stroke-width="0.9" fill="none"/><path d="M16.8 6.6 L18.3 4.1 M19.3 6.6 L20.8 4.1" stroke="#2b2b2b" stroke-width="1"/></svg>
<div style="position:absolute;left:425px;top:780px;width:238px;height:21px;background:#e1e1e1;border:1px solid #adadad;box-sizing:border-box"></div>
<svg style="position:absolute;left:429px;top:784px;" width="18" height="13" viewBox="0 0 18 13"><path d="M1 6.5 Q9 -1 17 6.5 Q9 14 1 6.5 Z" stroke="#2b2b2b" stroke-width="1.1" fill="none"/><circle cx="9" cy="6.5" r="2.5" fill="#2b2b2b"/></svg>
<div style="position:absolute;top:785.77px;font-size:11.5px;line-height:11.5px;font-weight:normal;color:#000;white-space:nowrap;letter-spacing:-0.1px;left:451px;">Capa Archicad</div>
<svg style="position:absolute;left:654.5px;top:786px;" width="6" height="10" viewBox="0 0 6 10"><path d="M0.5 0.5 V9.5 L5 5 Z" fill="#333"/></svg>
<div style="position:absolute;left:680px;top:780px;width:88px;height:21px;background:#e1e1e1;border:1px solid #adadad;box-sizing:border-box"></div>
<div style="position:absolute;top:785.77px;font-size:11.5px;line-height:11.5px;font-weight:normal;color:#000;white-space:nowrap;letter-spacing:0px;left:724px;transform:translateX(-50%);">Cancelar</div>
<div style="position:absolute;left:780px;top:780px;width:88px;height:21px;background:#e1e1e1;border:2px solid #0078d7;box-sizing:border-box"></div>
<div style="position:absolute;top:785.77px;font-size:11.5px;line-height:11.5px;font-weight:normal;color:#000;white-space:nowrap;letter-spacing:0px;left:824px;transform:translateX(-50%);">OK</div>
<svg style="position:absolute;left:870px;top:798px;" width="14" height="13" viewBox="0 0 14 13"><rect x="10" y="2" width="2" height="2" fill="#b8b8b8"/><rect x="10" y="6" width="2" height="2" fill="#b8b8b8"/><rect x="6" y="6" width="2" height="2" fill="#b8b8b8"/><rect x="10" y="10" width="2" height="2" fill="#b8b8b8"/><rect x="6" y="10" width="2" height="2" fill="#b8b8b8"/><rect x="2" y="10" width="2" height="2" fill="#b8b8b8"/></svg>
<svg style="position:absolute;left:660px;top:318px;" width="30" height="28" viewBox="0 0 30 28"><polygon points="12,9.5 21,5.1 26.3,14 16.4,18.9" stroke="#2b2b2b" stroke-width="1.2" fill="none" stroke-linejoin="round"/><path d="M16 11 L22.5 13 M20.5 8.5 L18 16" stroke="#2b2b2b" stroke-width="1"/><path d="M5.2 25.3 L2 19 M5.2 25.3 L11 21.6" stroke="#2b2b2b" stroke-width="1.2" fill="none"/><path d="M0.8 17.5 L4 19.5 L1.8 21.5 Z M12.5 20.8 L10.8 24.2 L8.8 21.2 Z" fill="#2b2b2b"/><path d="M12 21 L16.5 18.8" stroke="#2b2b2b" stroke-width="1.1" stroke-dasharray="1.6,1.2"/><path d="M6 25.5 H26" stroke="#2b2b2b" stroke-width="1.1" stroke-dasharray="2,1.3"/><path d="M26.5 17 Q24.6 19 23.9 21 Q23.1 23.5 21.9 23.5 Q20.3 23.5 20.3 20.5 Q20.3 17.6 21.9 17.6 Q23.1 17.6 23.9 20 Q24.6 22.6 26.5 24" stroke="#2b2b2b" stroke-width="1.1" fill="none"/></svg>
<div style="position:absolute;top:305.77px;font-size:11.5px;line-height:11.5px;font-weight:normal;color:#000;white-space:nowrap;letter-spacing:0px;left:728px;">Relativo</div>
<div style="position:absolute;left:775px;top:304px;width:13px;height:13px;background:#e1e1e1;border:1px solid #c0c0c0;box-sizing:border-box"></div>
<svg style="position:absolute;left:778px;top:306px;" width="8" height="9" viewBox="0 0 8 9"><path d="M1.5 1 L6 4.5 L1.5 8 Z" fill="#333"/></svg>
<div style="position:absolute;left:699px;top:321px;width:90px;height:23px;background:#fff;border:1px solid #7a7a7a;box-sizing:border-box"></div>
<div style="position:absolute;top:328.09px;font-size:11px;line-height:11px;font-weight:normal;color:#000;white-space:nowrap;letter-spacing:0px;left:703px;">0.00°</div>
<div style="position:absolute;left:810px;top:326px;width:13px;height:13px;background:#fff;border:1px solid #333;box-sizing:border-box"></div>
<svg style="position:absolute;left:830px;top:326px;" width="34" height="15" viewBox="0 0 34 15"><rect x="1.5" y="1.5" width="11" height="11" stroke="#2b2b2b" stroke-width="1.6" fill="none"/><path d="M4 4 L10 10 M10 4 L4 10" stroke="#2b2b2b" stroke-width="1.1"/><path d="M16.5 0 V14" stroke="#2b2b2b" stroke-width="1"/><rect x="20.5" y="1.5" width="11" height="11" stroke="#2b2b2b" stroke-width="1" stroke-dasharray="1.5,1.5" fill="none"/><path d="M23 4 L29 10 M29 4 L23 10" stroke="#2b2b2b" stroke-width="0.9"/></svg>
</body></html>
